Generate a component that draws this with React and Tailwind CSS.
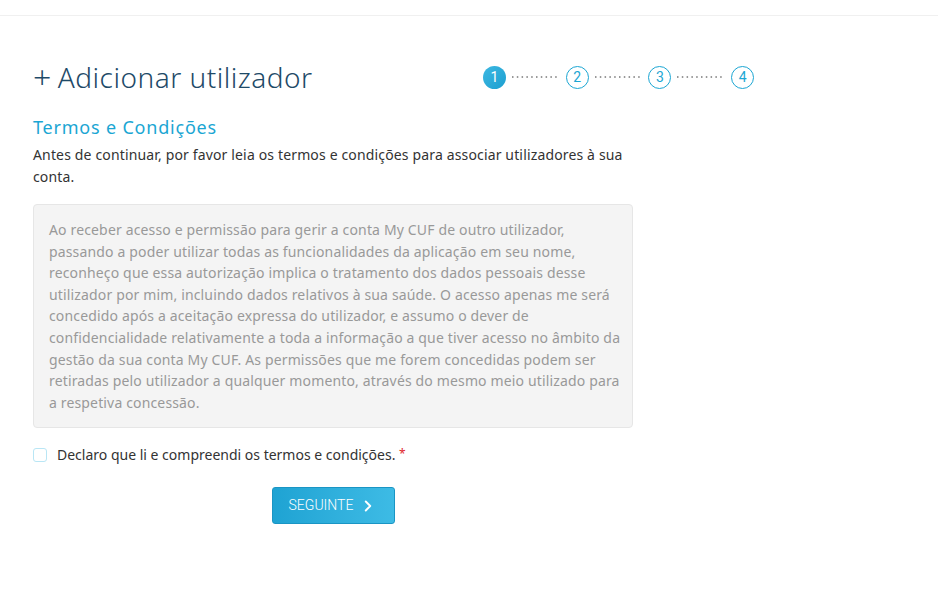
import { ChevronRight } from "lucide-react";

const intro = [
  "Antes de continuar, por favor leia os termos e condições para associar utilizadores à sua",
  "conta.",
];

const terms = [
  "Ao receber acesso e permissão para gerir a conta My CUF de outro utilizador,",
  "passando a poder utilizar todas as funcionalidades da aplicação em seu nome,",
  "reconheço que essa autorização implica o tratamento dos dados pessoais desse",
  "utilizador por mim, incluindo dados relativos à sua saúde. O acesso apenas me será",
  "concedido após a aceitação expressa do utilizador, e assumo o dever de",
  "confidencialidade relativamente a toda a informação a que tiver acesso no âmbito da",
  "gestão da sua conta My CUF. As permissões que me forem concedidas podem ser",
  "retiradas pelo utilizador a qualquer momento, através do mesmo meio utilizado para",
  "a respetiva concessão.",
];

function Stepper() {
  const steps = [1, 2, 3, 4];
  return (
    <div className="flex items-center" style={{ fontFamily: "Roboto, 'Liberation Sans', sans-serif" }}>
      {steps.map((n, i) => (
        <div key={n} className="flex items-center">
          {n === 1 ? (
            <div className="grid h-[23px] w-[23px] place-items-center rounded-full bg-gradient-to-br from-[#3cb8e2] to-[#1a9fd0] text-[14px] text-white">
              {n}
            </div>
          ) : (
            <div className="grid h-[23px] w-[23px] place-items-center rounded-full border border-[#1ba6d3] text-[14px] text-[#1ba6d3]">
              {n}
            </div>
          )}
          {i < steps.length - 1 ? (
            <svg width="59.7" height="4" className="shrink-0">
              <line x1="6" y1="2" x2="54" y2="2" stroke="#333" strokeWidth="1" strokeDasharray="1.5 3.3" />
            </svg>
          ) : null}
        </div>
      ))}
    </div>
  );
}

export default function App() {
  return (
    <div className="min-h-[596px] bg-white" style={{ fontFamily: "'Noto Sans', sans-serif" }}>
      <div className="h-[16px] border-b border-[#f0f0f0]" />
      <main className="px-[33px] pt-[43px]">
        <div className="flex items-center">
          <h1 className="flex w-[450px] items-center text-[28px] font-light leading-[36px] tracking-[0.5px] text-[#1e4a68]">
            <span className="mr-[6px] text-[32px] font-light">+</span>
            Adicionar utilizador
          </h1>
          <Stepper />
        </div>

        <div className="w-[600px]">
          <h2 className="mt-[20px] text-[18px] leading-[24px] tracking-[0.8px] text-[#1ba6d3]">Termos e Condições</h2>
          <p className="mt-[5px] whitespace-nowrap text-[14px] leading-[22px] tracking-[0.15px] text-[#333]">
            {intro.map((l) => (
              <span key={l} className="block">
                {l}
              </span>
            ))}
          </p>

          <div className="mt-[16px] whitespace-nowrap rounded-[4px] border border-[#e6e6e6] bg-[#f4f4f4] px-[15px] pb-[14px] pt-[14px] text-[14px] leading-[21.6px] tracking-[0.15px] text-[#999]">
            {terms.map((l) => (
              <span key={l} className="block">
                {l}
              </span>
            ))}
          </div>

          <label className="mt-[16px] flex items-center gap-[10px] text-[14px] text-[#333]">
            <span className="h-[14px] w-[14px] rounded-[3px] border border-[#b9e6f5] bg-white" />
            <span>
              Declaro que li e compreendi os termos e condições.{" "}
              <span className="relative -top-[2px] text-[12px] text-[#e0262b]">*</span>
            </span>
          </label>

          <div className="mt-[22px] flex justify-center">
            <button
              className="flex h-[37px] w-[123px] items-center justify-center gap-[6px] rounded-[3px] border border-[#1a95c4] bg-gradient-to-r from-[#1ea3d3] to-[#3dbbe5] text-[14px] font-light text-white"
              style={{ fontFamily: "Roboto, 'Liberation Sans', sans-serif" }}
            >
              SEGUINTE
              <ChevronRight size={18} strokeWidth={2.5} />
            </button>
          </div>
        </div>
      </main>
    </div>
  );
}
